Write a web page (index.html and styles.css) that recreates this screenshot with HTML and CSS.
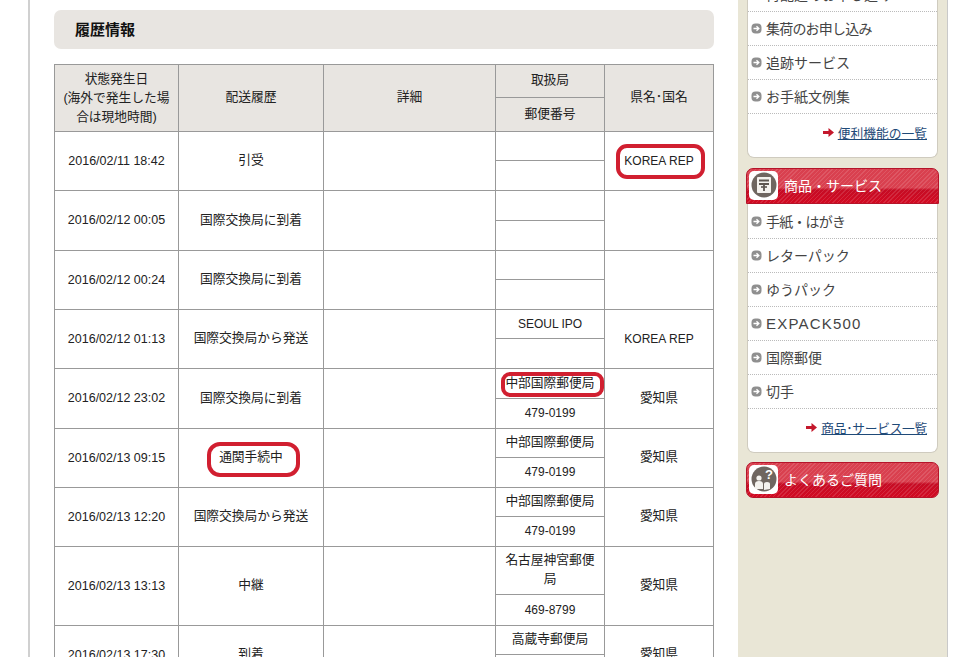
FILE: index.html
```html
<!DOCTYPE html>
<html lang="ja">
<head>
<meta charset="utf-8">
<title>履歴情報</title>
<link rel="stylesheet" href="styles.css">
</head>
<body>
<div class="page">
  <main class="main">
    <h2 class="heading">履歴情報</h2>
    <table class="history">
      <colgroup><col class="c1"><col class="c2"><col class="c3"><col class="c4"><col class="c5"></colgroup>
      <thead>
        <tr class="r33"><th rowspan="2" class="multi">状態発生日<br>(海外で発生した場<br>合は現地時間)</th><th rowspan="2">配送履歴</th><th rowspan="2">詳細</th><th>取扱局</th><th rowspan="2">県名･国名</th></tr>
        <tr class="r33"><th>郵便番号</th></tr>
      </thead>
      <tbody>
        <tr class="r29"><td rowspan="2" class="date">2016/02/11 18:42</td><td rowspan="2">引受</td><td rowspan="2"></td><td></td><td rowspan="2" class="latin"><span class="oval oval-korea">KOREA REP</span></td></tr>
        <tr class="r30"><td></td></tr>
        <tr class="r30"><td rowspan="2" class="date">2016/02/12 00:05</td><td rowspan="2">国際交換局に到着</td><td rowspan="2"></td><td></td><td rowspan="2"></td></tr>
        <tr class="r30"><td></td></tr>
        <tr class="r29"><td rowspan="2" class="date">2016/02/12 00:24</td><td rowspan="2">国際交換局に到着</td><td rowspan="2"></td><td></td><td rowspan="2"></td></tr>
        <tr class="r30"><td></td></tr>
        <tr class="r29"><td rowspan="2" class="date">2016/02/12 01:13</td><td rowspan="2">国際交換局から発送</td><td rowspan="2"></td><td class="latin">SEOUL IPO</td><td rowspan="2" class="latin">KOREA REP</td></tr>
        <tr class="r30"><td></td></tr>
        <tr class="r30"><td rowspan="2" class="date">2016/02/12 23:02</td><td rowspan="2">国際交換局に到着</td><td rowspan="2"></td><td><span class="oval oval-office">中部国際郵便局</span></td><td rowspan="2">愛知県</td></tr>
        <tr class="r30"><td class="latin">479-0199</td></tr>
        <tr class="r29"><td rowspan="2" class="date">2016/02/13 09:15</td><td rowspan="2"><span class="oval oval-customs">通関手続中</span></td><td rowspan="2"></td><td>中部国際郵便局</td><td rowspan="2">愛知県</td></tr>
        <tr class="r30"><td class="latin">479-0199</td></tr>
        <tr class="r29"><td rowspan="2" class="date">2016/02/13 12:20</td><td rowspan="2">国際交換局から発送</td><td rowspan="2"></td><td>中部国際郵便局</td><td rowspan="2">愛知県</td></tr>
        <tr class="r30"><td class="latin">479-0199</td></tr>
        <tr class="r48"><td rowspan="2" class="date">2016/02/13 13:13</td><td rowspan="2">中継</td><td rowspan="2"></td><td>名古屋神宮郵便局</td><td rowspan="2">愛知県</td></tr>
        <tr class="r31"><td class="latin">469-8799</td></tr>
        <tr class="r29"><td rowspan="2" class="date">2016/02/13 17:30</td><td rowspan="2">到着</td><td rowspan="2"></td><td>高蔵寺郵便局</td><td rowspan="2">愛知県</td></tr>
        <tr class="r30"><td></td></tr>
      </tbody>
    </table>
  </main>
  <aside class="side">
    <section class="card card-first">
      <ul class="menu">
        <li><svg class="bullet" viewBox="0 0 11 11"><rect x=".5" y=".5" width="10" height="10" rx="4" fill="#8f8f8f"/><path d="M2.500 5.500h5M5.500 3.200l2.400 2.300-2.400 2.300" fill="none" stroke="#fff" stroke-width="1.300"/></svg>再配達のお申し込み</li>
        <li><svg class="bullet" viewBox="0 0 11 11"><rect x=".5" y=".5" width="10" height="10" rx="4" fill="#8f8f8f"/><path d="M2.500 5.500h5M5.500 3.200l2.400 2.300-2.400 2.300" fill="none" stroke="#fff" stroke-width="1.300"/></svg><span class="tight">集荷のお申し込み</span></li>
        <li><svg class="bullet" viewBox="0 0 11 11"><rect x=".5" y=".5" width="10" height="10" rx="4" fill="#8f8f8f"/><path d="M2.500 5.500h5M5.500 3.200l2.400 2.300-2.400 2.300" fill="none" stroke="#fff" stroke-width="1.300"/></svg>追跡サービス</li>
        <li><svg class="bullet" viewBox="0 0 11 11"><rect x=".5" y=".5" width="10" height="10" rx="4" fill="#8f8f8f"/><path d="M2.500 5.500h5M5.500 3.200l2.400 2.300-2.400 2.300" fill="none" stroke="#fff" stroke-width="1.300"/></svg>お手紙文例集</li>
      </ul>
      <p class="more"><svg class="arrow" viewBox="0 0 11 9"><path d="M0 3h5.500V0L11 4.500 5.500 9V6H0z" fill="#c4182c"/></svg><a href="#">便利機能の一覧</a></p>
    </section>
    <h3 class="banner banner-top">
      <span class="badge"><svg viewBox="0 0 26 26"><circle cx="13" cy="13" r="12.500" fill="#6f6660"/><rect x="6" y="5" width="14" height="16" rx="1" fill="#f4f2ee"/><path d="M8 8.500h10M8 12h10M13 12v7" stroke="#5d5650" stroke-width="1.800" fill="none"/><path d="M10 15h6" stroke="#5d5650" stroke-width="1.600" fill="none"/></svg></span>
      商品・サービス
    </h3>
    <section class="card card-products">
      <ul class="menu">
        <li><svg class="bullet" viewBox="0 0 11 11"><rect x=".5" y=".5" width="10" height="10" rx="4" fill="#8f8f8f"/><path d="M2.500 5.500h5M5.500 3.200l2.400 2.300-2.400 2.300" fill="none" stroke="#fff" stroke-width="1.300"/></svg><span class="tight">手紙・はがき</span></li>
        <li><svg class="bullet" viewBox="0 0 11 11"><rect x=".5" y=".5" width="10" height="10" rx="4" fill="#8f8f8f"/><path d="M2.500 5.500h5M5.500 3.200l2.400 2.300-2.400 2.300" fill="none" stroke="#fff" stroke-width="1.300"/></svg>レターパック</li>
        <li><svg class="bullet" viewBox="0 0 11 11"><rect x=".5" y=".5" width="10" height="10" rx="4" fill="#8f8f8f"/><path d="M2.500 5.500h5M5.500 3.200l2.400 2.300-2.400 2.300" fill="none" stroke="#fff" stroke-width="1.300"/></svg>ゆうパック</li>
        <li><svg class="bullet" viewBox="0 0 11 11"><rect x=".5" y=".5" width="10" height="10" rx="4" fill="#8f8f8f"/><path d="M2.500 5.500h5M5.500 3.200l2.400 2.300-2.400 2.300" fill="none" stroke="#fff" stroke-width="1.300"/></svg><span class="wide">EXPACK500</span></li>
        <li><svg class="bullet" viewBox="0 0 11 11"><rect x=".5" y=".5" width="10" height="10" rx="4" fill="#8f8f8f"/><path d="M2.500 5.500h5M5.500 3.200l2.400 2.300-2.400 2.300" fill="none" stroke="#fff" stroke-width="1.300"/></svg>国際郵便</li>
        <li><svg class="bullet" viewBox="0 0 11 11"><rect x=".5" y=".5" width="10" height="10" rx="4" fill="#8f8f8f"/><path d="M2.500 5.500h5M5.500 3.200l2.400 2.300-2.400 2.300" fill="none" stroke="#fff" stroke-width="1.300"/></svg>切手</li>
      </ul>
      <p class="more"><svg class="arrow" viewBox="0 0 11 9"><path d="M0 3h5.500V0L11 4.500 5.500 9V6H0z" fill="#c4182c"/></svg><a class="link-products" href="#">商品･サービス一覧</a></p>
    </section>
    <h3 class="banner banner-faq">
      <span class="badge"><svg viewBox="0 0 26 26"><circle cx="13" cy="13" r="12.500" fill="#6f6660"/><circle cx="8" cy="12" r="2.600" fill="#f4f2ee"/><path d="M4 23v-5q0-3 4-3t4 3v5z" fill="#f4f2ee"/><path d="M13 24v-6q0-2 3-2t3 2v5z" fill="#f4f2ee"/><text x="14" y="13" class="q">?</text></svg></span>
      よくあるご質問
    </h3>
  </aside>
</div>
</body>
</html>
```
FILE: styles.css
```css
* { box-sizing: border-box; }
html, body { margin: 0; height: 657px; overflow: hidden; background: #fff; }
body { font-family: "Liberation Sans", "Noto Sans CJK JP", sans-serif; color: #222; font-size: 13px; }
.page { display: flex; width: 920px; height: 657px; margin-left: 28px; border-left: 2px solid #d0d0d0; border-right: 1px solid #c9c9c9; overflow: hidden; }
.main { width: 708px; padding: 10px 24px 0 24px; flex: none; }
.heading { margin: 0 0 15px; height: 39px; line-height: 39px; padding-left: 21px; background: #e8e5e1; border-radius: 7px; font-size: 15px; font-weight: bold; color: #111; }
.history { border-collapse: collapse; table-layout: fixed; width: 659px; }
.c1 { width: 124px; } .c2 { width: 145px; } .c3 { width: 172px; } .c4 { width: 109px; } .c5 { width: 109px; }
.history th, .history td { border: 1px solid #999; padding: 0 4px 3px; text-align: center; vertical-align: middle; font-weight: normal; font-size: 12.750px; line-height: 19px; }
.history th { background: #e8e5e1; }
.history .multi { padding-bottom: 1px; }
.history .date { font-size: 12.500px; padding-bottom: 0; }
.history .latin { font-size: 12px; padding-bottom: 0; }
.r33 { height: 33px; }
.r33 + .r33 { height: 34px; }
.r29 { height: 29px; }
.r30 { height: 30px; }
.r31 { height: 31px; }
.r48 { height: 48px; }
.oval { position: relative; display: inline-block; }
.oval::after { content: ""; position: absolute; border: 4px solid #d11f30; border-radius: 11px; }
.oval-korea::after { inset: -8px -11px -8px -8px; }
.oval-office::after { inset: -1px -9px -5px -4px; border-radius: 9px; }
.oval-customs::after { inset: -5px -17px -11px -12px; border-radius: 13px; }
.side { flex: 1; background: #e9e6d6; padding: 0 8px; }
.card { background: #fff; margin: 0 1px; border: 1px solid #cfcbbf; border-top: 0; border-radius: 0 0 7px 7px; }
.card-first { margin-top: -22px; margin-bottom: 10px; }
.card-products { padding-top: 1px; }
.menu { list-style: none; margin: 0; padding: 0; }
.menu li { display: flex; align-items: center; gap: 4px; height: 34px; padding: 0 0 1px 3px; font-size: 14px; color: #444; border-bottom: 1px dotted #bbb; white-space: nowrap; }
.tight { letter-spacing: -.8px; }
.wide { font-size: 15px; letter-spacing: 1.200px; }
.bullet { width: 11px; height: 11px; flex: none; }
.more { display: flex; justify-content: flex-end; align-items: center; gap: 4px; margin: 0; height: 43px; padding: 0 10px 7px 0; font-size: 12.750px; }
.more a { color: #1f4a78; }
.more .link-products { letter-spacing: -.3px; }
.arrow { width: 11px; height: 9px; }
.banner { display: flex; align-items: center; gap: 6px; margin: 0; width: 193px; height: 36px; padding: 0 0 2px 2px; font-size: 14px; font-weight: normal; color: #fff; border: 1px solid #b5142a; background: repeating-linear-gradient(135deg, rgba(255,255,255,.12) 0 1px, transparent 1px 3px), linear-gradient(#d9404f, #d9404f 55%, #c60c24 62%, #d20a22); }
.banner-top { border-radius: 7px 7px 0 0; }
.banner-faq { margin-top: 9px; border-radius: 7px; }
.badge { width: 29px; height: 29px; background: #fff; border-radius: 5px; display: flex; align-items: center; justify-content: center; flex: none; }
.badge svg { width: 26px; height: 26px; }
.q { font: bold 13px "Liberation Sans", sans-serif; fill: #fff; }
```
